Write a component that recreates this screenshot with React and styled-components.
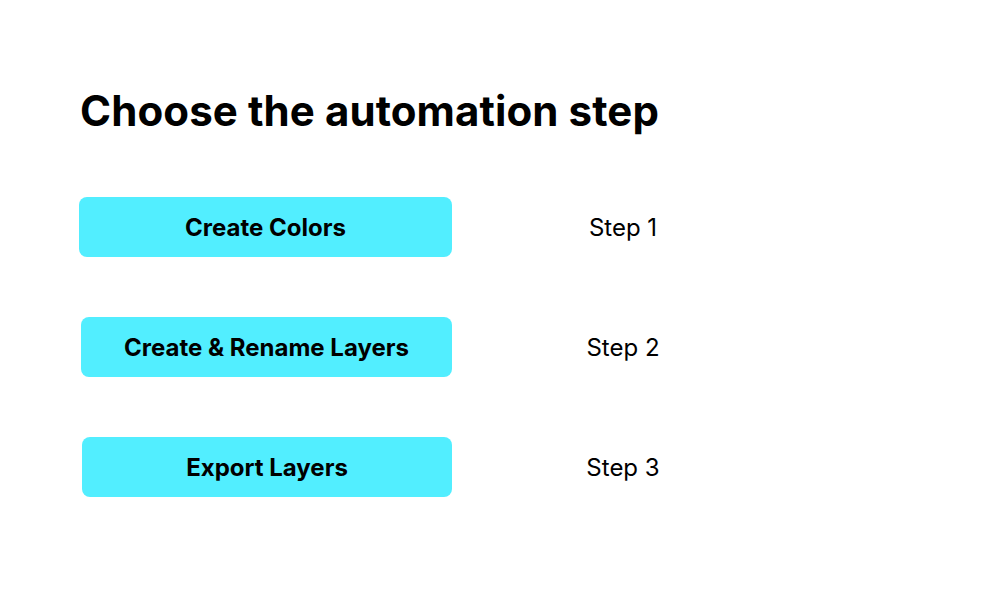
import React from 'react';
import styled, { createGlobalStyle } from 'styled-components';

const GlobalStyle = createGlobalStyle`
    html, body {
        margin: 0;
        padding: 0;
        background: #ffffff;
    }
    body {
        font-family: Inter, "Noto Sans", sans-serif;
        color: #000000;
    }
`;

const Page = styled.div`
    width: 1000px;
    height: 600px;
    box-sizing: border-box;
    padding: 86px 0 0 80px;
`;

const Title = styled.h1`
    margin: 0;
    font-size: 42px;
    line-height: 50px;
    font-weight: 700;
    letter-spacing: 0.1px;
`;

const StepList = styled.div`
    display: flex;
    flex-direction: column;
    gap: 60px;
    margin-top: 61px;
    width: 581px;
`;

const Row = styled.div`
    display: flex;
    align-items: center;
    justify-content: space-between;
`;

const StepButton = styled.button`
    box-sizing: border-box;
    width: ${props => 373 - props.indent}px;
    height: 60px;
    margin-left: ${props => props.indent - 1}px;
    padding: 0;
    border: none;
    border-radius: 8px;
    background-color: #52eeff;
    font-family: Inter, "Noto Sans", sans-serif;
    font-size: 24px;
    font-weight: 700;
    color: #000000;
    cursor: pointer;
`;

const StepLabel = styled.span`
    width: 76px;
    padding-top: 2px;
    text-align: center;
    font-size: 24px;
    font-weight: 400;
    line-height: 30px;
`;

const steps = [
    { label: 'Create Colors', step: 'Step 1', indent: 0 },
    { label: 'Create & Rename Layers', step: 'Step 2', indent: 2 },
    { label: 'Export Layers', step: 'Step 3', indent: 3 },
];

const App = () => (
    <Page>
        <GlobalStyle />
        <Title>Choose the automation step</Title>
        <StepList>
            {steps.map(s => (
                <Row key={s.step}>
                    <StepButton indent={s.indent}>{s.label}</StepButton>
                    <StepLabel>{s.step}</StepLabel>
                </Row>
            ))}
        </StepList>
    </Page>
);

export default App;
